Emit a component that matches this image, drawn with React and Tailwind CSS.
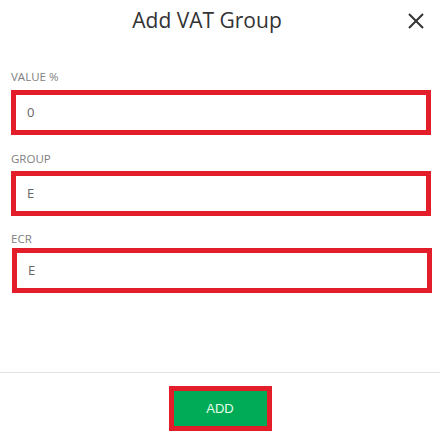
const fields = [
  { label: 'VALUE %', value: '0', wrap: 'mt-[27px]', gap: 'mb-[5px]', box: 'ml-[11px] mr-[9px]' },
  { label: 'GROUP', value: 'E', wrap: 'mt-[16px]', gap: 'mb-[4px]', box: 'ml-[11px] mr-[9px]' },
  { label: 'ECR', value: 'E', wrap: 'mt-[15px]', gap: 'mb-[1px]', box: 'ml-[12px] mr-[8px]' },
]

export default function App() {
  return (
    <div className="flex h-[438px] w-[440px] flex-col bg-white font-['Open_Sans',sans-serif]">
      <div className="flex h-[42px] items-center pl-[11px] pr-[11px]">
        <h1 className="flex-1 text-center text-[21px] font-medium text-[#333]">Add VAT Group</h1>
        <button className="flex h-[26px] w-[26px] items-center justify-center text-[#333]">
          <svg width="18" height="18" viewBox="0 0 18 18" fill="none" stroke="currentColor" strokeWidth="2">
            <path d="M2 2 16 16M16 2 2 16" />
          </svg>
        </button>
      </div>

      {fields.map((f) => (
        <div key={f.label} className={f.wrap}>
          <div className={`px-[11px] text-[11.5px] leading-[16px] text-[#808080] ${f.gap}`}>{f.label}</div>
          <div className={`flex h-[45px] items-center border-[5px] border-[#e31e2a] px-[11px] text-[13px] text-[#666] ${f.box}`}>
            {f.value}
          </div>
        </div>
      ))}

      <div className="mt-auto border-t border-[#e3e3e3] pb-[7px] pt-[13px]">
        <div className="flex justify-center">
          <button className="h-[45px] w-[103px] border-[5px] border-[#e31e2a] bg-[#00ab58] font-['Liberation_Sans',sans-serif] text-[13px] text-[#e6ffe9]">
            ADD
          </button>
        </div>
      </div>
    </div>
  )
}
